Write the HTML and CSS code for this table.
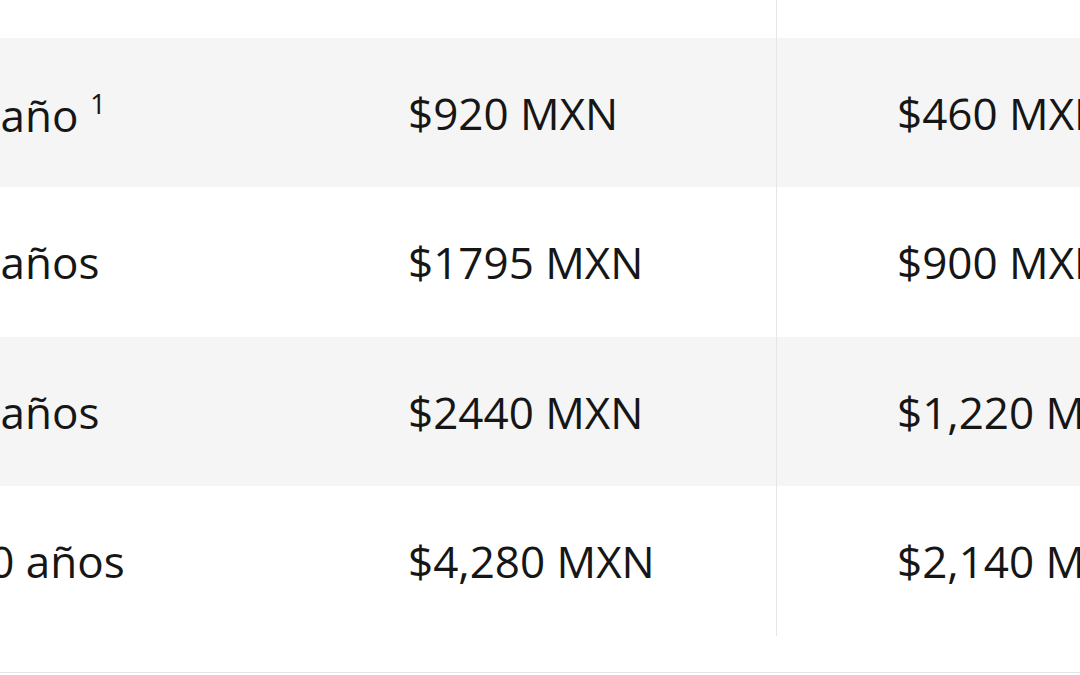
FILE: index.html
```html
<!DOCTYPE html>
<html lang="es">
<head>
<meta charset="utf-8">
<title>Precios</title>
<link rel="stylesheet" href="styles.css">
</head>
<body>
<div class="viewport">
  <div class="table">
    <div class="row head">
      <div class="cell c1"></div>
      <div class="cell c2"></div>
      <div class="cell c3"></div>
    </div>
    <div class="row alt">
      <div class="cell c1"><span>1 año <sup class="note">1</sup></span></div>
      <div class="cell c2"><span>$920 MXN</span></div>
      <div class="cell c3"><span>$460 MXN</span></div>
    </div>
    <div class="row tall">
      <div class="cell c1"><span>2 años</span></div>
      <div class="cell c2"><span>$1795 MXN</span></div>
      <div class="cell c3"><span>$900 MXN</span></div>
    </div>
    <div class="row alt">
      <div class="cell c1"><span>3 años</span></div>
      <div class="cell c2"><span>$2440 MXN</span></div>
      <div class="cell c3"><span>$1,220 MXN</span></div>
    </div>
    <div class="row tall">
      <div class="cell c1"><span>10 años</span></div>
      <div class="cell c2"><span>$4,280 MXN</span></div>
      <div class="cell c3"><span>$2,140 MXN</span></div>
    </div>
  </div>
  <div class="foot"></div>
</div>
</body>
</html>
```

FILE: styles.css
```css
html, body {
  margin: 0;
  padding: 0;
  background: #ffffff;
}

.viewport {
  width: 1080px;
  height: 675px;
  overflow: hidden;
  font-family: "Open Sans", "Noto Sans", sans-serif;
  font-size: 44px;
  color: #161616;
}

.table {
  margin-left: -60px;
  width: 1200px;
}

.row {
  display: grid;
  grid-template-columns: 468px 368px 1fr;
  height: 149px;
}

.row.tall {
  height: 150px;
}

.row.head {
  height: 38px;
}

.row.alt {
  background: #f5f5f5;
}

.cell {
  display: flex;
  align-items: center;
  white-space: nowrap;
  line-height: 1;
}

.c1 {
  padding-left: 24px;
}

.c3 {
  border-left: 1px solid #e6e6e6;
  padding-left: 120px;
}

.note {
  font-size: 28px;
  vertical-align: 18px;
  line-height: 1;
}

.foot {
  height: 36px;
  border-bottom: 1px solid #e4e4e4;
}
```
